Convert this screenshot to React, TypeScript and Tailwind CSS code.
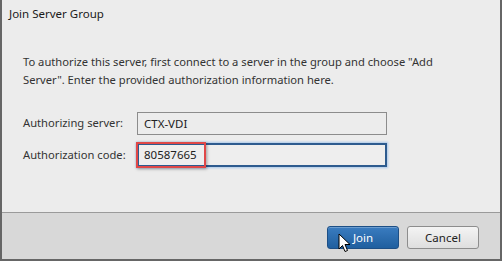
import React from 'react';

function Cursor() {
  return (
    <svg width="14" height="20" viewBox="0 0 14 20" className="absolute left-[10px] top-[6px]">
      <path d="M1 1 L1 16 L4.5 12.5 L7 18.5 L9.5 17.5 L7 11.5 L12 11.5 Z" fill="#fff" stroke="#000" strokeWidth="1" strokeLinejoin="round" />
    </svg>
  );
}

export default function App() {
  return (
    <div
      className="w-[502px] h-[261px] flex flex-col bg-[#ececec] border-l-2 border-r-2 border-b-2 border-[#666666] text-[#2b2b2b] overflow-hidden"
      style={{ fontFamily: '"Noto Sans", "Open Sans", sans-serif' }}
    >
      <div className="flex-1 flex flex-col">
        <div className="pl-[7px] pt-[6px] text-[11.5px] leading-[16px] text-[#1a1a1a]">Join Server Group</div>
        <p className="pl-[21px] pr-[10px] mt-[31px] text-[11.2px] leading-[18px] text-[#333]">
          To authorize this server, first connect to a server in the group and choose "Add
          <br />
          Server". Enter the provided authorization information here.
        </p>
        <div className="mt-[23px] pl-[21px] flex flex-col gap-[8px]">
          <div className="flex items-center">
            <span className="w-[114px] text-[11.2px] text-[#333]">Authorizing server:</span>
            <div className="w-[250px] h-[23px] border border-[#8c8c8c] bg-[#ececec] flex items-center pl-[6px] text-[11.5px] text-[#222]">
              CTX-VDI
            </div>
          </div>
          <div className="flex items-center">
            <span className="w-[114px] text-[11.2px] text-[#333]">Authorization code:</span>
            <div className="relative w-[250px] h-[24px] border-2 border-[#2d5b8f] bg-[#eeeeee] shadow-[0_0_2px_1px_#a9c7ea] flex items-center pl-[5px] text-[11.5px] text-[#222]">
              <span className="relative z-10">80587665</span>
              <div className="absolute left-[-3px] top-[-3px] w-[70px] h-[26px] border-2 border-[#e04848] shadow-[1px_1px_3px_rgba(0,0,0,0.35)]" />
            </div>
          </div>
        </div>
      </div>
      <div className="h-[47px] shrink-0 border-t border-[#9a9a9a] bg-[#d8d8d8] flex items-start justify-end gap-[8px] pt-[13px] pr-[21px]">
        <button className="relative w-[72px] h-[23px] rounded-[3px] border border-[#1d4f86] bg-gradient-to-b from-[#3a7cc0] to-[#1f5f9f] text-white text-[11.5px] shadow-[inset_0_1px_0_rgba(255,255,255,0.25)]">
          Join
          <Cursor />
        </button>
        <button className="w-[72px] h-[23px] rounded-[3px] border border-[#8d8d8d] bg-gradient-to-b from-[#f4f4f4] to-[#dedede] text-[#222] text-[11.5px]">
          Cancel
        </button>
      </div>
    </div>
  );
}
